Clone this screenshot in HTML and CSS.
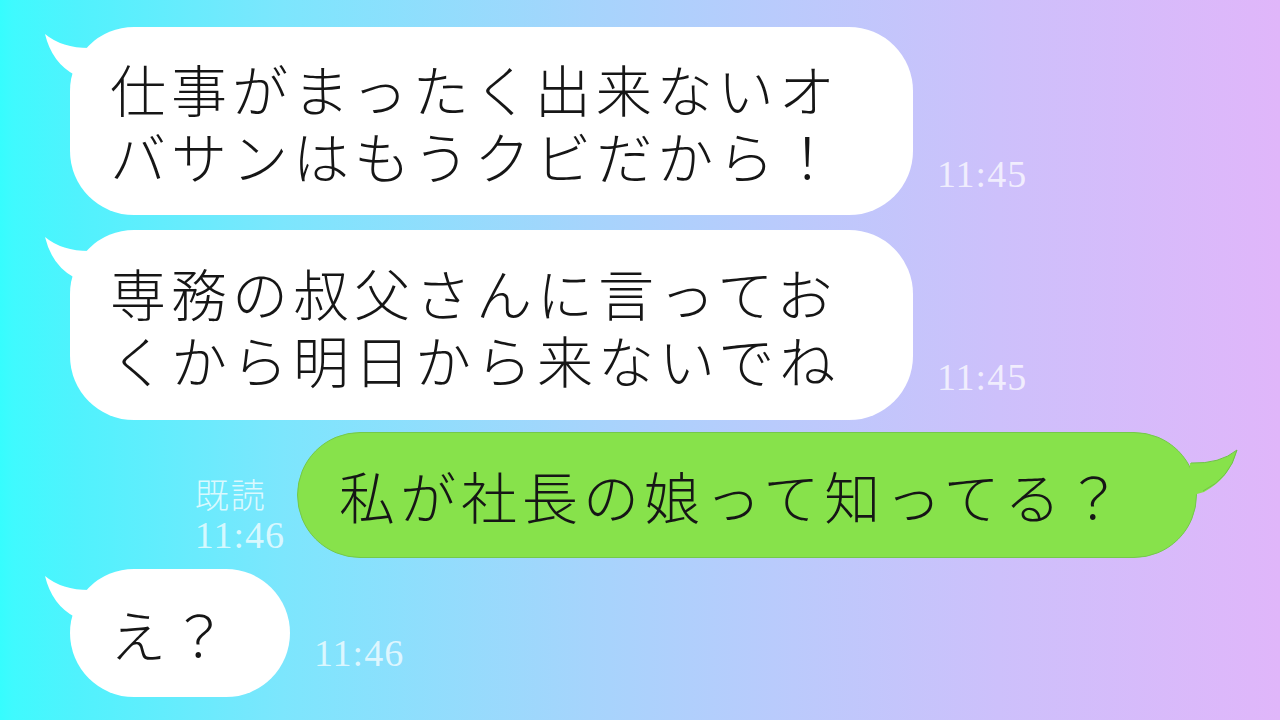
FILE: index.html
```html
<!DOCTYPE html>
<html lang="ja">
<head>
    <meta charset="UTF-8">
    <meta name="viewport" content="width=device-width, initial-scale=1.0">
    <title>トーク</title>
    <link rel="stylesheet" href="styles.css">
</head>
<body>
    <div class="chat">
        <div class="row row-first">
            <div class="bubble bubble-left bubble-wide">
                <svg class="tail tail-left" width="50" height="50" viewBox="0 0 50 50">
                    <path d="M2 3 Q20 18 50 17 L50 50 L32 44 Q9 32 2 3 Z" fill="#fff"/>
                </svg>
                <p>仕事がまったく出来ないオ<br>バサンはもうクビだから！</p>
            </div>
            <span class="time">11:45</span>
        </div>

        <div class="row row-second">
            <div class="bubble bubble-left bubble-wide">
                <svg class="tail tail-left" width="50" height="50" viewBox="0 0 50 50">
                    <path d="M2 3 Q20 18 50 17 L50 50 L32 44 Q9 32 2 3 Z" fill="#fff"/>
                </svg>
                <p>専務の叔父さんに言ってお<br>くから明日から来ないでね</p>
            </div>
            <span class="time time-low">11:45</span>
        </div>

        <div class="row row-mine">
            <div class="read">
                <span class="read-label">既読</span>
                <span class="time">11:46</span>
            </div>
            <div class="bubble bubble-mine">
                <svg class="tail tail-right" width="50" height="50" viewBox="0 0 50 50">
                    <path d="M47 4 Q30 18 0 17 L0 50 L14 46 Q40 32 47 4 Z" fill="#87e24b"/>
                    <path d="M47 4 Q30 18 1 17 M13 45 Q40 32 47 4" fill="none" stroke="#6fc447" stroke-width="1"/>
                </svg>
                <p>私が社長の娘って知ってる？</p>
            </div>
        </div>

        <div class="row row-last">
            <div class="bubble bubble-left bubble-short">
                <svg class="tail tail-left" width="50" height="50" viewBox="0 0 50 50">
                    <path d="M2 3 Q20 18 50 17 L50 50 L32 44 Q9 32 2 3 Z" fill="#fff"/>
                </svg>
                <p>え？</p>
            </div>
            <span class="time time-last">11:46</span>
        </div>
    </div>
</body>
</html>
```

FILE: styles.css
```css
html, body {
    height: 100%;
}
body {
    margin: 0;
    overflow: hidden;
    font-family: "Noto Sans CJK JP", "Noto Sans", sans-serif;
    background: linear-gradient(to right, #36fdfe 0%, #3ffafe 1%, #50f2fd 6%, #7ce6fd 22%, #a6d4fc 46%, #bbcafc 62%, #cdc0fb 78%, #e0b6fa 100%);
}
.chat {
    padding-top: 27px;
}
.row {
    display: flex;
    align-items: flex-end;
}
.row-second {
    margin-top: 15px;
}
.row-mine {
    margin-top: 12px;
    justify-content: flex-end;
    padding-right: 83px;
}
.row-last {
    margin-top: 11px;
}
.bubble {
    position: relative;
    box-sizing: border-box;
    border-radius: 64px;
    padding: 28px 0 28px 40px;
}
.bubble p {
    position: relative;
    margin: 0;
    font-size: 56px;
    font-weight: 300;
    line-height: 67px;
    letter-spacing: 5px;
    color: #161616;
    white-space: nowrap;
}
.bubble-left {
    margin-left: 70px;
    background: #fff;
}
.bubble-wide {
    width: 843px;
    padding-top: 27px;
    padding-bottom: 27px;
}
.row-second .bubble-wide {
    padding-top: 28px;
    padding-bottom: 28px;
}
.bubble-short {
    width: 220px;
    padding-top: 30px;
    padding-bottom: 31px;
}
.bubble-mine {
    width: 900px;
    background: #87e24b;
    border: 1px solid #74c94a;
    padding: 28px 0 29px 41px;
}
.tail {
    position: absolute;
    top: 4px;
}
.tail-left {
    left: -27px;
}
.tail-right {
    right: -44px;
    top: 13px;
}
.time {
    font-family: "Liberation Serif", "DejaVu Serif", serif;
    font-size: 38px;
    line-height: 38px;
    letter-spacing: 1px;
    color: rgba(255, 255, 255, 0.72);
    margin-left: 24px;
    margin-bottom: 22px;
}
.time-low {
    margin-bottom: 24px;
}
.time-last {
    margin-bottom: 25px;
}
.read {
    display: flex;
    flex-direction: column;
    margin-right: 12px;
    margin-bottom: 4px;
}
.read .time {
    margin: 5px 0 0 0;
}
.read-label {
    font-size: 34px;
    font-weight: 300;
    line-height: 34px;
    color: rgba(255, 255, 255, 0.75);
    letter-spacing: 2px;
}
```
